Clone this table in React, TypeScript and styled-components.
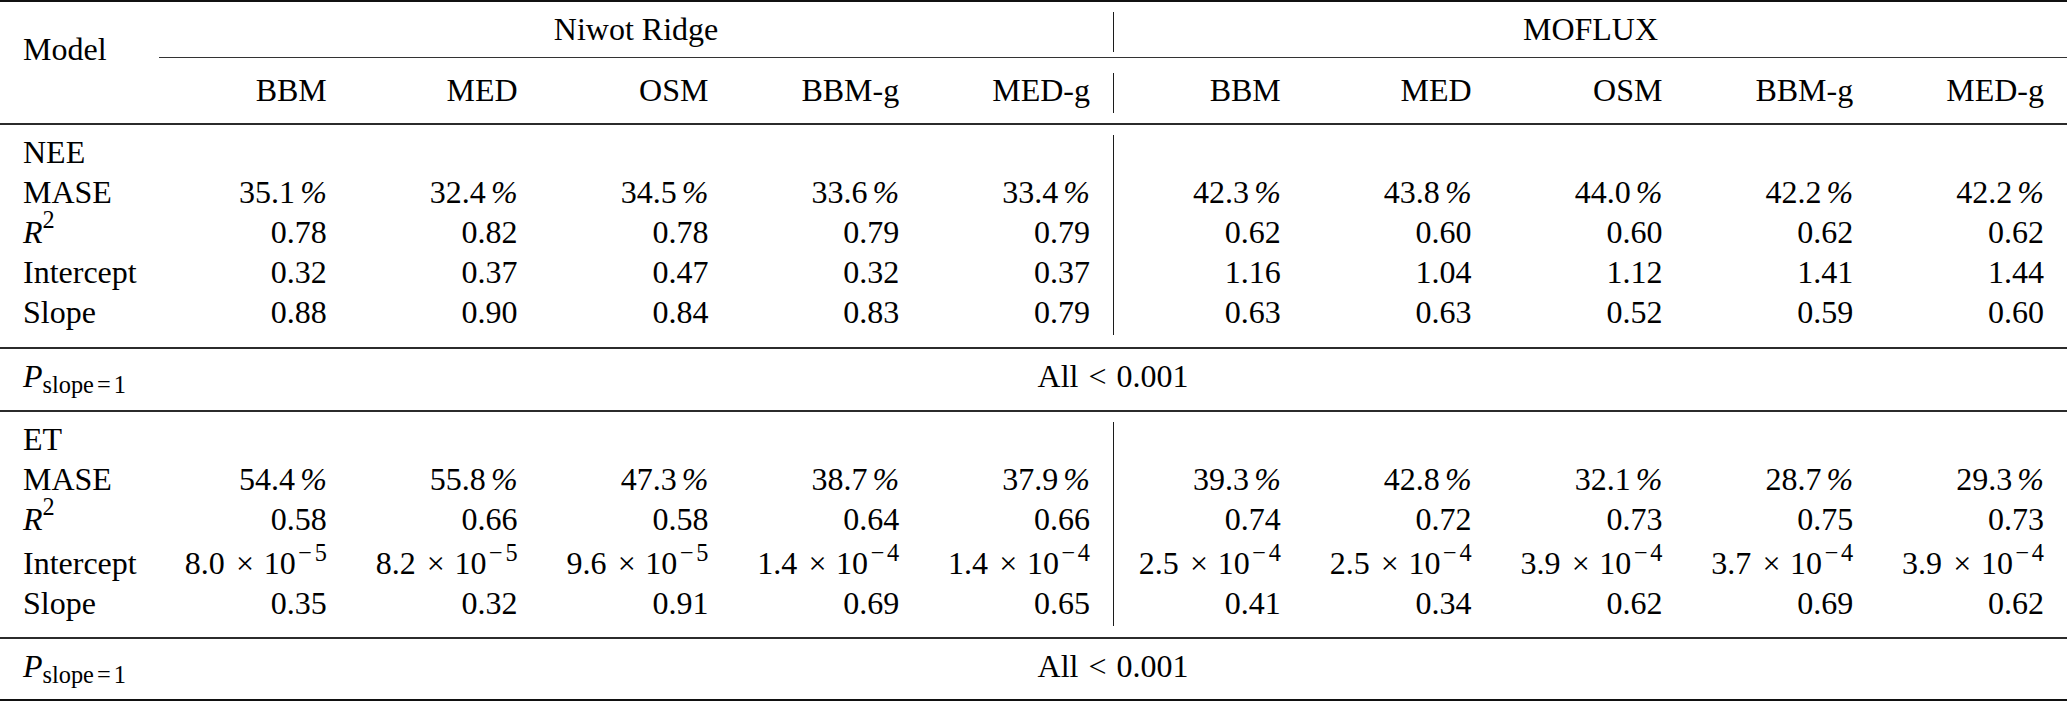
import React from 'react';
import styled, { createGlobalStyle } from 'styled-components';

const GlobalStyle = createGlobalStyle`
  html, body { margin: 0; padding: 0; background: #fff; overflow: hidden; }
  body { font-family: "Liberation Serif", "Times New Roman", serif; color: #000; }
`;

const COLS = '159px repeat(10, minmax(0, 1fr))';
const INK = '#1c1c1c';

const Table = styled.div`
  width: 2067px;
  display: flex;
  flex-direction: column;
  font-family: "Liberation Serif", "Times New Roman", serif;
  font-size: 32px;
  line-height: 34px;
  color: #000;
`;

const Rule = styled.div<{ $w: number; $top?: number; $bottom?: number; $tone?: string }>`
  height: ${(p) => p.$w}px;
  background: ${(p) => p.$tone ?? INK};
  margin-top: ${(p) => p.$top ?? 0}px;
  margin-bottom: ${(p) => p.$bottom ?? 0}px;
  flex: none;
`;

const Header = styled.div`
  display: grid;
  grid-template-columns: ${COLS};
  grid-template-rows: 40px 5px 1px 15px 40px;
`;

const ModelLabel = styled.div`
  grid-column: 1;
  grid-row: 1 / 6;
  padding: 20px 0 0 23px;
`;

const GroupTitle = styled.div<{ $second?: boolean }>`
  grid-row: 1;
  grid-column: ${(p) => (p.$second ? '7 / 12' : '2 / 7')};
  text-align: center;
  border-left: ${(p) => (p.$second ? `1px solid ${INK}` : 'none')};
`;

const CmidRule = styled.div`
  grid-row: 3;
  grid-column: 2 / 12;
  background: #333;
`;

const HeadCell = styled.div<{ $divider?: boolean }>`
  grid-row: 5;
  text-align: right;
  padding-right: 23px;
  white-space: nowrap;
  border-left: ${(p) => (p.$divider ? `1px solid ${INK}` : 'none')};
`;

const Row = styled.div<{ $h?: number; $lead?: number }>`
  display: grid;
  grid-template-columns: ${COLS};
  height: ${(p) => p.$h ?? 40}px;
  --lead: ${(p) => p.$lead ?? 0}px;
`;

const Label = styled.div`
  padding: var(--lead) 0 0 23px;
  white-space: nowrap;
`;

const Num = styled.div<{ $divider?: boolean }>`
  padding: var(--lead) 23px 0 0;
  text-align: right;
  white-space: nowrap;
  border-left: ${(p) => (p.$divider ? `1px solid ${INK}` : 'none')};
`;

const SpanText = styled.div`
  grid-column: 2 / 12;
  text-align: center;
  word-spacing: 0.06em;
  white-space: nowrap;
`;

const Var = styled.span`
  font-style: italic;
`;

const Sup = styled.sup<{ $lift?: number }>`
  font-size: 0.76em;
  vertical-align: ${(p) => p.$lift ?? 0.55}em;
  line-height: 0;
`;

const Sub = styled.sub`
  font-size: 0.76em;
  vertical-align: -0.25em;
  line-height: 0;
`;

const MathSym = styled.span<{ $w: number }>`
  display: inline-block;
  width: ${(p) => p.$w}em;
  text-align: center;
`;

const Pct = styled.span`
  font-style: italic;
  margin-left: 0.16em;
`;

const TimesSign = styled.span`
  margin: 0 0.3em 0 0.35em;
`;

const pct = (v: string) => (
  <>
    {v}
    <Pct>%</Pct>
  </>
);

const sci = (m: string, e: string) => (
  <>
    {m}
    <TimesSign>×</TimesSign>10
    <Sup>
      <MathSym $w={0.78}>−</MathSym>
      {e}
    </Sup>
  </>
);

const RSquared = () => (
  <>
    <Var>R</Var>
    <Sup $lift={0.6}>2</Sup>
  </>
);

const PSlope = () => (
  <>
    <Var>P</Var>
    <Sub>
      slope<MathSym $w={0.82}>=</MathSym>1
    </Sub>
  </>
);

const MODELS = ['BBM', 'MED', 'OSM', 'BBM-g', 'MED-g'];

type Line = { label: React.ReactNode; values: React.ReactNode[]; h?: number; lead?: number };

const blank = Array.from({ length: 10 }, () => '');

const NEE: Line[] = [
  { label: 'NEE', values: blank },
  {
    label: 'MASE',
    values: ['35.1', '32.4', '34.5', '33.6', '33.4', '42.3', '43.8', '44.0', '42.2', '42.2'].map(pct),
  },
  { label: <RSquared />, values: ['0.78', '0.82', '0.78', '0.79', '0.79', '0.62', '0.60', '0.60', '0.62', '0.62'] },
  { label: 'Intercept', values: ['0.32', '0.37', '0.47', '0.32', '0.37', '1.16', '1.04', '1.12', '1.41', '1.44'] },
  { label: 'Slope', values: ['0.88', '0.90', '0.84', '0.83', '0.79', '0.63', '0.63', '0.52', '0.59', '0.60'] },
];

const ET: Line[] = [
  { label: 'ET', values: blank },
  {
    label: 'MASE',
    values: ['54.4', '55.8', '47.3', '38.7', '37.9', '39.3', '42.8', '32.1', '28.7', '29.3'].map(pct),
  },
  { label: <RSquared />, values: ['0.58', '0.66', '0.58', '0.64', '0.66', '0.74', '0.72', '0.73', '0.75', '0.73'] },
  {
    label: 'Intercept',
    h: 44,
    lead: 4,
    values: [
      sci('8.0', '5'),
      sci('8.2', '5'),
      sci('9.6', '5'),
      sci('1.4', '4'),
      sci('1.4', '4'),
      sci('2.5', '4'),
      sci('2.5', '4'),
      sci('3.9', '4'),
      sci('3.7', '4'),
      sci('3.9', '4'),
    ],
  },
  { label: 'Slope', values: ['0.35', '0.32', '0.91', '0.69', '0.65', '0.41', '0.34', '0.62', '0.69', '0.62'] },
];

const Block = ({ lines }: { lines: Line[] }) => (
  <div>
    {lines.map((line, i) => (
      <Row key={i} $h={line.h} $lead={line.lead}>
        <Label>{line.label}</Label>
        {line.values.map((v, j) => (
          <Num key={j} $divider={j === 5}>
            {v}
          </Num>
        ))}
      </Row>
    ))}
  </div>
);

const PRow = () => (
  <Row>
    <Label>
      <PSlope />
    </Label>
    <SpanText>All &lt; 0.001</SpanText>
  </Row>
);

export default function App() {
  return (
    <>
      <GlobalStyle />
      <Table>
        <Rule $w={2} $bottom={10} $tone="#111" />
        <Header>
          <ModelLabel>Model</ModelLabel>
          <GroupTitle>Niwot Ridge</GroupTitle>
          <GroupTitle $second>MOFLUX</GroupTitle>
          <CmidRule />
          {[...MODELS, ...MODELS].map((m, i) => (
            <HeadCell key={i} $divider={i === 5}>
              {m}
            </HeadCell>
          ))}
        </Header>
        <Rule $w={2} $top={10} $bottom={10} $tone="#2b2b2b" />
        <Block lines={NEE} />
        <Rule $w={2} $top={12} $bottom={10} $tone="#2b2b2b" />
        <PRow />
        <Rule $w={2} $top={11} $bottom={10} $tone="#2b2b2b" />
        <Block lines={ET} />
        <Rule $w={2} $top={11} $bottom={10} $tone="#2b2b2b" />
        <PRow />
        <Rule $w={2} $top={10} $tone="#111" />
      </Table>
    </>
  );
}
